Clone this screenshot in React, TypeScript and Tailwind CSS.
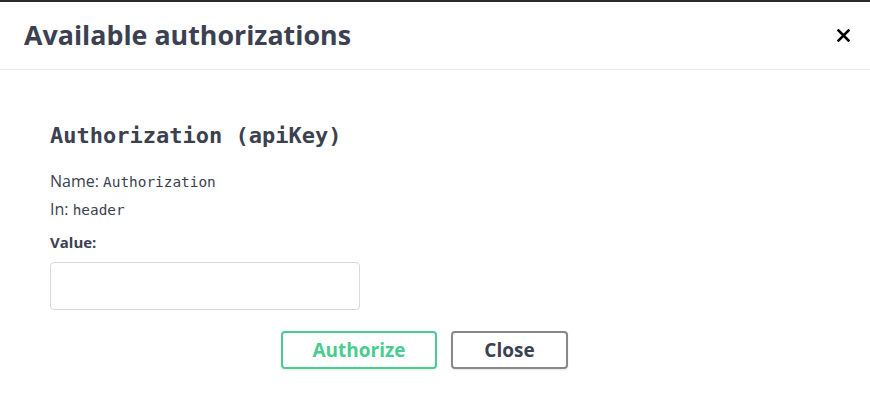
export default function App() {
  const sans = { fontFamily: '"Open Sans", "Noto Sans", sans-serif' };
  return (
    <div className="h-[420px] w-[870px] overflow-hidden bg-white text-[#3b4151]" style={sans}>
      <div className="h-[2px] bg-[#2b2b2b]" />
      <div className="flex h-[68px] items-center justify-between border-b border-[#ebebeb] pl-6 pr-[17px]">
        <h3 className="text-[26.8px] font-bold leading-none">Available authorizations</h3>
        <button className="flex h-5 w-5 items-center justify-center">
          <svg width="13" height="13" viewBox="0 0 13 13">
            <path d="M1.5 1.5 L11.5 11.5 M11.5 1.5 L1.5 11.5" stroke="#000" strokeWidth="2.6" strokeLinecap="square" />
          </svg>
        </button>
      </div>
      <div className="pl-[50px] pt-[52px]">
        <h4 className="font-['DejaVu_Sans_Mono',monospace] text-[22px] font-bold leading-[28px]">
          Authorization (apiKey)
        </h4>
        <div className="mt-[18px] text-[16px] font-normal leading-[27px]">
          <p>
            Name: <code className="font-['DejaVu_Sans_Mono',monospace] text-[14.4px] font-normal">Authorization</code>
          </p>
          <p>
            In: <code className="font-['DejaVu_Sans_Mono',monospace] text-[14.4px] font-normal">header</code>
          </p>
        </div>
        <label className="mt-[8px] block text-[15px] font-bold leading-[20px]">Value:</label>
        <input
          type="text"
          className="mt-[10px] block h-[48px] w-[310px] rounded-[4px] border border-[#d9d9d9] bg-white px-2 outline-none"
        />
      </div>
      <div className="mt-[21px] flex gap-[14px] pl-[281px]">
        <button className="h-[38px] w-[156px] rounded-[4px] border-2 border-[#49cc90] text-[19px] font-bold text-[#49cc90] shadow-[0_1px_2px_rgba(0,0,0,0.1)]">
          Authorize
        </button>
        <button className="h-[38px] w-[117px] rounded-[4px] border-2 border-[#888] text-[19px] font-bold text-[#3b4151] shadow-[0_1px_2px_rgba(0,0,0,0.1)]">
          Close
        </button>
      </div>
    </div>
  );
}
